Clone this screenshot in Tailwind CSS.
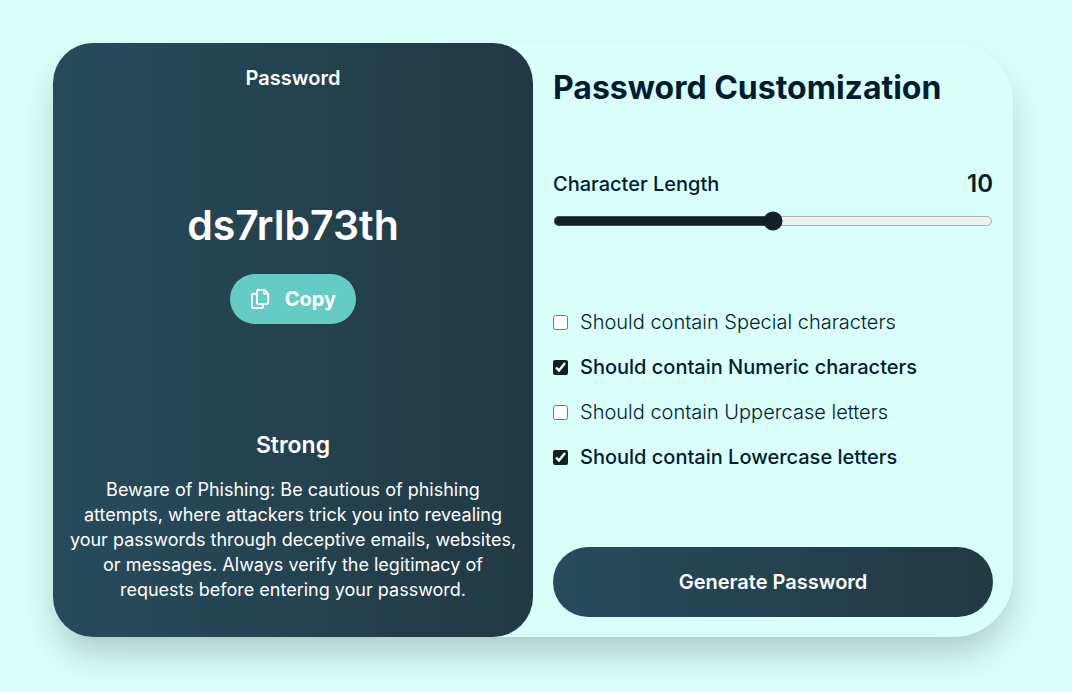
<!DOCTYPE html>
<html lang="en">
<head>
<meta charset="utf-8">
<meta name="viewport" content="width=device-width, initial-scale=1">
<title>Password Generator</title>
<script src="https://cdn.jsdelivr.net/npm/@tailwindcss/browser@4"></script>
</head>
<body class="flex min-h-screen justify-center bg-[#dafffb] pt-[43px] pr-[59px] pb-[55px] pl-[53px] font-['Inter',sans-serif] text-[#001c30]">
<main class="grid w-full max-w-[960px] grid-cols-2 rounded-[60px] rounded-l-[40px] bg-[#dafffb] shadow-[0_20px_36px_-5px_rgba(0,0,0,0.22)]">
  <section class="flex flex-col items-center justify-between rounded-[40px] bg-linear-to-r from-[#274b5c] to-[#213943] px-4 pt-5 pb-[35px] text-center text-white">
    <h2 class="text-xl leading-[30px] font-semibold">Password</h2>
    <div class="flex flex-col items-center gap-5">
      <p class="text-[41px] leading-[58px] font-semibold">ds7rlb73th</p>
      <button type="button" class="flex h-[50px] items-center gap-[15px] rounded-full bg-[#64ccc5] px-5 text-xl font-bold text-white">
        <svg class="size-5" viewBox="0 0 20 20" fill="none" stroke="currentColor" stroke-width="1.8" stroke-linejoin="round" aria-hidden="true"><path d="M8 1h6.500l3.700 3.700V14a1 1 0 0 1-1 1H8a1 1 0 0 1-1-1V2a1 1 0 0 1 1-1z"/><path d="M7 5H3a1 1 0 0 0-1 1v12a1 1 0 0 0 1 1h9a1 1 0 0 0 1-1v-3"/><path stroke-width="1.400" d="M14 1.500v3.500h4"/></svg>
        Copy
      </button>
    </div>
    <div>
      <h3 class="mb-[14px] text-[23px] leading-9 font-semibold">Strong</h3>
      <p class="text-lg leading-[25px]">Beware of Phishing: Be cautious of phishing attempts, where attackers trick you into revealing your passwords through deceptive emails, websites, or messages. Always verify the legitimacy of requests before entering your password.</p>
    </div>
  </section>
  <form class="flex flex-col p-5">
    <h1 class="text-[32px] leading-[50px] font-bold">Password Customization</h1>
    <div class="mt-[53px] flex flex-col gap-[9px]">
      <div class="flex items-center justify-between text-xl leading-9 font-medium"><label for="length">Character Length</label><output for="length" class="text-2xl leading-9 font-semibold">10</output></div>
      <input id="length" type="range" min="0" max="20" value="10" class="w-full accent-[#0f2027] [zoom:1.25]">
    </div>
    <div class="mt-[76px] flex flex-col gap-[15px] text-xl leading-[30px]">
      <label class="flex items-center gap-3 font-light"><input type="checkbox" class="size-[15px] accent-[#0f2027]">Should contain Special characters</label>
      <label class="flex items-center gap-3 font-medium"><input type="checkbox" checked class="size-[15px] accent-[#0f2027]">Should contain Numeric characters</label>
      <label class="flex items-center gap-3 font-light"><input type="checkbox" class="size-[15px] accent-[#0f2027]">Should contain Uppercase letters</label>
      <label class="flex items-center gap-3 font-medium"><input type="checkbox" checked class="size-[15px] accent-[#0f2027]">Should contain Lowercase letters</label>
    </div>
    <button type="button" class="mt-auto h-[70px] rounded-full bg-linear-to-r from-[#274b5c] to-[#213943] text-xl font-semibold text-white">Generate Password</button>
  </form>
</main>
</body>
</html>
